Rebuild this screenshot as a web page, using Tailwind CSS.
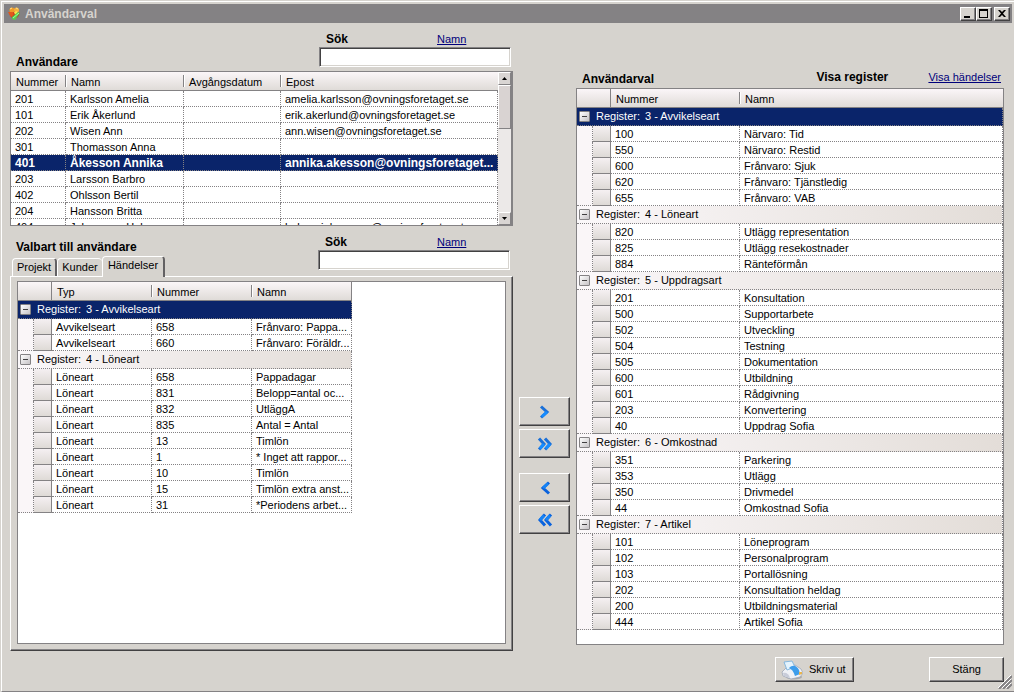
<!DOCTYPE html>
<html lang="sv">
<head>
<meta charset="utf-8">
<title>Användarval</title>
<script src="https://cdn.jsdelivr.net/npm/@tailwindcss/browser@4"></script>
</head>
<body class="bg-[#d6d3ce] pt-px pl-px text-[11px] text-black font-['Liberation_Sans',Arial,sans-serif]">
<div class="relative flex min-h-[calc(100vh-1px)] flex-col border-t border-l border-b border-t-white border-l-white border-b-[#848284] pt-[2px] pr-[2px] pl-[2px]">

  <header class="flex h-[19px] items-center bg-[#848284] pr-[2px] pl-1">
    <svg class="mr-1 size-[13px] shrink-0" viewBox="0 0 13 13" aria-hidden="true">
      <path d="M1 6l4-2 5 1 2 1-2 4-4 2-3-2z" fill="#c8281c"/>
      <circle cx="4" cy="3" r="2.6" fill="#f09a28"/><circle cx="8.5" cy="3" r="2.5" fill="#f6b23c"/>
      <path d="M0 5h4l2 2-2 3-2-1z" fill="#e2581c"/><path d="M6 5l3-1 1 2-3 2z" fill="#f7e34c"/>
      <path d="M4 10l6-5 2 1-5 7-3-1z" fill="#52d04e"/><path d="M5 11l6-5" stroke="#a9f59a"/>
      <path d="M2 2l2-1M8 1l2 1" stroke="#ffe08a"/>
    </svg>
    <h1 class="grow text-[12px] font-bold text-[#d6d3ce]">Användarval</h1>
    <button aria-label="Minimera" class="h-[14px] w-4 border border-t-white border-l-white border-r-[#424142] border-b-[#424142] bg-[#d6d3ce] shadow-[inset_-1px_-1px_0_#848284]"><svg class="size-full" viewBox="0 0 14 12"><path d="M3 8h6v2H3z"/></svg></button>
    <button aria-label="Maximera" class="h-[14px] w-4 border border-t-white border-l-white border-r-[#424142] border-b-[#424142] bg-[#d6d3ce] shadow-[inset_-1px_-1px_0_#848284]"><svg class="size-full" viewBox="0 0 14 12"><path fill-rule="evenodd" d="M2 1h9v9H2zM3 3v6h7V3z"/></svg></button>
    <button aria-label="Stäng fönster" class="ml-[2px] h-[14px] w-4 border border-t-white border-l-white border-r-[#424142] border-b-[#424142] bg-[#d6d3ce] shadow-[inset_-1px_-1px_0_#848284]"><svg class="size-full" viewBox="0 0 14 12"><path d="M3 2h2l2 2 2-2h2L8 5.500l3 3.500H9L7 7 5 9H3l3-3.500z"/></svg></button>
  </header>

  <main class="grid grow grid-cols-[minmax(0,503fr)_51px_minmax(0,428fr)] gap-x-[6px] pr-2 pl-[6px]">

    <section class="flex flex-col pt-2">
      <div class="flex items-end justify-between">
        <h2 class="mb-px pl-[6px] text-[12px] leading-4 font-bold">Användare</h2>
        <div class="mr-[2px] mb-1 w-48">
          <div class="flex h-4 items-center pl-[7px]"><label for="sok1" class="w-[111px] text-[12px] font-bold">Sök</label><a href="#" class="text-[#00007b] underline">Namn</a></div>
          <input id="sok1" type="text" class="block h-5 w-full border border-t-[#848284] border-l-[#848284] border-r-white border-b-white bg-white px-1 shadow-[inset_1px_1px_0_#424142,inset_-1px_-1px_0_#d6d3ce] outline-none">
        </div>
      </div>

      <div class="flex h-[155px] border border-r-2 border-[#848284] bg-white">
        <div class="min-w-0 grow overflow-hidden">
          <table class="w-full table-fixed border-separate border-spacing-0 text-left">
            <colgroup><col class="w-[55px]"><col class="w-[118px]"><col class="w-[97px]"><col></colgroup>
            <thead class="bg-linear-to-b from-[#fbf6f8] to-[#dedad6]"><tr id="users-head"></tr></thead>
            <tbody id="users"></tbody>
          </table>
        </div>
        <div class="flex w-[13px] shrink-0 flex-col bg-[#ece9e8]">
          <button aria-label="Rulla upp" class="h-[13px] border border-t-white border-l-white border-r-[#848284] border-b-[#848284] bg-[#d9d5d3]"><svg class="size-full" viewBox="0 0 11 11"><path d="M3 7h5L5.500 4z"/></svg></button>
          <div class="h-[44px] border border-t-white border-l-white border-r-[#848284] border-b-[#848284] bg-[#d9d3d2]"></div>
          <div class="grow"></div>
          <button aria-label="Rulla ned" class="h-[13px] border border-t-white border-l-white border-r-[#848284] border-b-[#848284] bg-[#d9d5d3]"><svg class="size-full" viewBox="0 0 11 11"><path d="M3 4h5L5.500 7z"/></svg></button>
        </div>
      </div>

      <div class="mt-2 flex items-end justify-between">
        <div>
          <h2 class="pl-[6px] text-[12px] leading-[18px] font-bold">Valbart till användare</h2>
          <div class="flex items-end pl-[2px]" role="tablist">
            <button role="tab" class="h-[18px] w-[45px] rounded-t-sm border-t border-r-2 border-l border-t-white border-l-white border-r-[#636163]">Projekt</button>
            <button role="tab" class="h-[18px] w-[45px] rounded-t-sm border-t border-l border-t-white border-l-white">Kunder</button>
            <button role="tab" aria-selected="true" class="z-10 -mb-px h-[21px] w-[63px] rounded-t-sm border-t border-r-2 border-l border-t-white border-l-white border-r-[#636163] bg-[#d6d3ce] pb-1">Händelser</button>
          </div>
        </div>
        <div class="mr-[3px] mb-[6px] w-48">
          <div class="flex h-4 items-center pl-[7px]"><label for="sok2" class="w-[112px] text-[12px] font-bold">Sök</label><a href="#" class="text-[#00007b] underline">Namn</a></div>
          <input id="sok2" type="text" class="block h-5 w-full border border-t-[#848284] border-l-[#848284] border-r-white border-b-white bg-white px-1 shadow-[inset_1px_1px_0_#424142,inset_-1px_-1px_0_#d6d3ce] outline-none">
        </div>
      </div>

      <div class="flex grow flex-col border border-t-white border-l-white border-r-[#424142] border-b-[#424142] pt-1 pr-[6px] pb-[6px] pl-[6px] shadow-[inset_-1px_-1px_0_#848284]">
        <div class="grow border border-[#848284] bg-white">
          <table class="w-[334px] table-fixed border-separate border-spacing-0 text-left">
            <colgroup><col class="w-4"><col class="w-[18px]"><col class="w-[100px]"><col class="w-[100px]"><col class="w-[100px]"></colgroup>
            <thead class="bg-linear-to-b from-[#fbf6f8] to-[#dedad6]"><tr id="events-head"></tr></thead>
            <tbody id="events"></tbody>
          </table>
        </div>
      </div>
    </section>

    <nav class="flex flex-col gap-[3px] pt-[374px]" aria-label="Flytta rader">
      <button aria-label="Lägg till" class="flex h-[29px] items-center justify-center border border-t-white border-l-white border-r-[#424142] border-b-[#424142] shadow-[inset_-1px_-1px_0_#848284]"><svg class="h-[14px] w-4" viewBox="0 0 16 14" fill="none" stroke-width="3"><path d="M4 1.500L10 7l-6 5.500" stroke="#1b70d8"/><path d="M5 11.500L10 7" stroke="#168cff"/></svg></button>
      <button aria-label="Lägg till alla" class="flex h-[29px] items-center justify-center border border-t-white border-l-white border-r-[#424142] border-b-[#424142] shadow-[inset_-1px_-1px_0_#848284]"><svg class="h-[14px] w-4" viewBox="0 0 16 14" fill="none" stroke-width="3"><path d="M2 1.500L7 7l-5 5.500M8 1.500L13 7l-5 5.500" stroke="#1b70d8"/><path d="M3 11.500L7 7M9 11.500L13 7" stroke="#168cff"/></svg></button>
      <button aria-label="Ta bort" class="mt-3 flex h-[29px] items-center justify-center border border-t-white border-l-white border-r-[#424142] border-b-[#424142] shadow-[inset_-1px_-1px_0_#848284]"><svg class="h-[14px] w-4" viewBox="0 0 16 14" fill="none" stroke-width="3"><path d="M12 1.500L6 7l6 5.500" stroke="#0a62dd"/><path d="M11 2.500L6 7" stroke="#1683f5"/></svg></button>
      <button aria-label="Ta bort alla" class="flex h-[29px] items-center justify-center border border-t-white border-l-white border-r-[#424142] border-b-[#424142] shadow-[inset_-1px_-1px_0_#848284]"><svg class="h-[14px] w-4" viewBox="0 0 16 14" fill="none" stroke-width="3"><path d="M8 1.500L3 7l5 5.500M14 1.500L9 7l5 5.500" stroke="#0a62dd"/><path d="M7 2.500L3 7M13 2.500L9 7" stroke="#1683f5"/></svg></button>
    </nav>

    <section class="flex flex-col pt-[46px] pb-[6px]">
      <div class="flex h-[19px] pr-[3px] pl-[6px]">
        <h2 class="grow pt-[2px] text-[12px] leading-4 font-bold">Användarval</h2>
        <span class="w-[112px] text-[12px] leading-4 font-bold">Visa register</span>
        <a href="#" class="leading-4 text-[#00007b] underline">Visa händelser</a>
      </div>
      <div class="grow border border-[#848284] bg-white">
        <table class="w-full table-fixed border-separate border-spacing-0 text-left">
          <colgroup><col class="w-4"><col class="w-[18px]"><col class="w-[129px]"><col></colgroup>
          <thead class="bg-linear-to-b from-[#fbf6f8] to-[#dedad6]"><tr id="chosen-head"></tr></thead>
          <tbody id="chosen"></tbody>
        </table>
      </div>
    </section>
  </main>

  <footer class="flex justify-end pt-[6px] pr-2 pb-[9px]">
    <button class="mr-[75px] flex h-[25px] w-[79px] items-center gap-[6px] border border-t-white border-l-white border-r-[#424142] border-b-[#424142] pl-[5px] text-[11px] shadow-[inset_-1px_-1px_0_#848284]">
      <svg class="h-5 w-[22px]" viewBox="0 0 22 20" aria-hidden="true">
        <ellipse cx="13" cy="17" rx="8" ry="2.500" fill="#aaa9a8"/>
        <path d="M1 12l5-5 8-2 6 4 2 4-3 4-9 2-8-3z" fill="#eff1f6" stroke="#9ea6b6" stroke-width=".8"/>
        <path d="M3 2l8-1 3 6-8 3z" fill="#e4f3fd" stroke="#86b8de"/>
        <path d="M8 8c4-4 8-2 10 2l1 4-5 2c-1-3-2-6-6-8z" fill="#3d9deb"/>
        <path d="M2 13c3-1 6 1 7 5l-6-2z" fill="#c8ccd9"/><path d="M18 12l3 0 0 2-3 1z" fill="#e9b44c"/>
      </svg>Skriv ut</button>
    <button class="h-[25px] w-[75px] border border-t-white border-l-white border-r-[#424142] border-b-[#424142] text-[11px] shadow-[inset_-1px_-1px_0_#848284]">Stäng</button>
  </footer>
  <svg class="absolute right-[2px] bottom-[2px] size-[14px]" viewBox="0 0 14 14" aria-hidden="true"><path d="M1 14L14 1M5 14l9-9M9 14l5-5" stroke="#848284" stroke-width="2"/><path d="M0 13L13 0M4 13l9-9M8 13l5-5" stroke="#fff"/></svg>
</div>

<script>
const el = id => document.getElementById(id);
const heads = (names, lead) => (lead ? '<th colspan="2" class="h-[19px] border-r border-b border-[#848284] p-0"></th>' : '') +
  names.map((n, i) => {
    const last = i === names.length - 1;
    return `<th scope="col" class="${last && names.length === 3 ? 'h-[19px] border-r border-b border-[#848284] p-0 font-normal' : 'h-[19px] border-b border-[#848284] p-0 font-normal'}"><div class="${last ? 'flex h-3 items-center pt-[2px] pl-[5px]' : 'flex h-3 items-center border-r border-[#848284] pt-[2px] pl-[5px] shadow-[1px_0_0_#fff]'}">${n}</div></th>`;
  }).join('');
const cell = t => `<td class="h-4 overflow-hidden border-r border-b border-dotted border-[#848284] p-0 pt-px pl-1 leading-[14px] whitespace-nowrap">${t}</td>`;

el('users-head').innerHTML = heads(['Nummer', 'Namn', 'Avgångsdatum', 'Epost'], false);
el('users').innerHTML = [
  ['201', 'Karlsson Amelia', '', 'amelia.karlsson@ovningsforetaget.se'],
  ['101', 'Erik Åkerlund', '', 'erik.akerlund@ovningsforetaget.se'],
  ['202', 'Wisen Ann', '', 'ann.wisen@ovningsforetaget.se'],
  ['301', 'Thomasson Anna', '', ''],
  ['401', 'Åkesson Annika', '', 'annika.akesson@ovningsforetaget...'],
  ['203', 'Larsson Barbro', '', ''],
  ['402', 'Ohlsson Bertil', '', ''],
  ['204', 'Hansson Britta', '', ''],
  ['404', 'Johansson Helena', '', 'helena.johansson@ovningsforetaget.se'],
].map(r => `<tr class="${r[0] === '401' ? 'bg-[#0a246a] text-[12px] font-bold text-white' : ''}">${r.map(cell).join('')}</tr>`).join('');

const groups = (data, cols) => data.map(([title, rows], g) =>
  `<tr><td colspan="${cols + 2}" class="${g === 0 ? 'h-[18px] border-r border-b border-dotted border-[#848284] bg-[#0a246a] p-0 text-white' : 'h-[18px] border-r border-b border-dotted border-[#848284] bg-linear-to-r from-[#fbf8fa] to-[#e3ddd8] p-0'}"><div class="flex items-center pl-[2px] leading-[17px]"><button aria-label="Fäll ihop" class="mr-[6px] flex size-[11px] items-center justify-center rounded-[1px] border border-[#848284] bg-linear-to-br from-white to-[#c6c3c6]"><span class="h-px w-[5px] bg-[#424142]"></span></button><span class="mr-[5px]">Register:</span>${title}</div></td></tr>` +
  rows.map((r, i) => `<tr><td class="${i === rows.length - 1 ? 'border-r border-b border-dotted border-[#848284] bg-[#faf6f8] p-0' : 'border-r border-dotted border-[#848284] bg-[#faf6f8] p-0'}"></td><td class="border-r border-b border-[#848284] bg-linear-to-b from-[#f5f0f2] to-[#dedad6] p-0"></td>${r.map(cell).join('')}</tr>`).join('')).join('');

el('events-head').innerHTML = heads(['Typ', 'Nummer', 'Namn'], true);
el('events').innerHTML = groups([
  ['3 - Avvikelseart', [['Avvikelseart', '658', 'Frånvaro: Pappa...'], ['Avvikelseart', '660', 'Frånvaro: Föräldr...']]],
  ['4 - Löneart', [['Löneart', '658', 'Pappadagar'], ['Löneart', '831', 'Belopp=antal oc...'], ['Löneart', '832', 'UtläggA'], ['Löneart', '835', 'Antal = Antal'], ['Löneart', '13', 'Timlön'], ['Löneart', '1', '* Inget att rappor...'], ['Löneart', '10', 'Timlön'], ['Löneart', '15', 'Timlön extra anst...'], ['Löneart', '31', '*Periodens arbet...']]],
], 3);

el('chosen-head').innerHTML = heads(['Nummer', 'Namn'], true);
el('chosen').innerHTML = groups([
  ['3 - Avvikelseart', [['100', 'Närvaro: Tid'], ['550', 'Närvaro: Restid'], ['600', 'Frånvaro: Sjuk'], ['620', 'Frånvaro: Tjänstledig'], ['655', 'Frånvaro: VAB']]],
  ['4 - Löneart', [['820', 'Utlägg representation'], ['825', 'Utlägg resekostnader'], ['884', 'Ränteförmån']]],
  ['5 - Uppdragsart', [['201', 'Konsultation'], ['500', 'Supportarbete'], ['502', 'Utveckling'], ['504', 'Testning'], ['505', 'Dokumentation'], ['600', 'Utbildning'], ['601', 'Rådgivning'], ['203', 'Konvertering'], ['40', 'Uppdrag Sofia']]],
  ['6 - Omkostnad', [['351', 'Parkering'], ['353', 'Utlägg'], ['350', 'Drivmedel'], ['44', 'Omkostnad Sofia']]],
  ['7 - Artikel', [['101', 'Löneprogram'], ['102', 'Personalprogram'], ['103', 'Portallösning'], ['202', 'Konsultation heldag'], ['200', 'Utbildningsmaterial'], ['444', 'Artikel Sofia']]],
], 2);
</script>
</body>
</html>
